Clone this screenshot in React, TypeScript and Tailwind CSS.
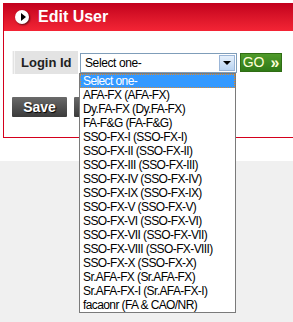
const options = [
  'Select one-',
  'AFA-FX (AFA-FX)',
  'Dy.FA-FX (Dy.FA-FX)',
  'FA-F&G (FA-F&G)',
  'SSO-FX-I (SSO-FX-I)',
  'SSO-FX-II (SSO-FX-II)',
  'SSO-FX-III (SSO-FX-III)',
  'SSO-FX-IV (SSO-FX-IV)',
  'SSO-FX-IX (SSO-FX-IX)',
  'SSO-FX-V (SSO-FX-V)',
  'SSO-FX-VI (SSO-FX-VI)',
  'SSO-FX-VII (SSO-FX-VII)',
  'SSO-FX-VIII (SSO-FX-VIII)',
  'SSO-FX-X (SSO-FX-X)',
  'Sr.AFA-FX (Sr.AFA-FX)',
  'Sr.AFA-FX-I (Sr.AFA-FX-I)',
  'facaonr (FA & CAO/NR)',
]

export default function App() {
  return (
    <div className="relative h-[322px] w-[293px] overflow-hidden bg-[#f0f0f0] font-['Liberation_Sans',Arial,sans-serif]">
      <div className="h-[161px] bg-white pl-[3px] pt-[3px]">
        <div className="border-b border-l border-[#d4001c]">
          <div className="flex h-[28px] items-center gap-[9px] bg-gradient-to-b from-[#c2001d] to-[#f42435] pl-[11px]">
            <div className="flex h-[14px] w-[14px] items-center justify-center rounded-full bg-white shadow-[1px_1px_2px_rgba(0,0,0,0.6)]">
              <div className="ml-[2px] h-0 w-0 border-y-[4px] border-l-[5px] border-y-transparent border-l-black" />
            </div>
            <span className="text-[16px] font-bold text-white">Edit User</span>
          </div>

          <div className="px-[8px] pb-[20px] pt-[20px]">
            <div className="flex items-center">
              <div className="flex h-[23px] w-[66px] items-center border-l-[3px] border-double border-[#f4f4f4] bg-[#e3e3e3] pl-[6px]">
                <span className="text-[13px] font-bold text-[#222]">Login Id</span>
              </div>
              <div className="ml-[2px] flex h-[20px] w-[157px] items-center justify-between border border-[#7f9db9] bg-white">
                <span className="pl-[4px] text-[12px] tracking-[-0.4px] text-black">Select one-</span>
                <div className="mr-[1px] flex h-[16px] w-[16px] items-center justify-center border border-[#9bb6d8] bg-gradient-to-b from-[#e6f0fb] to-[#b9d3f1]">
                  <div className="h-0 w-0 border-x-[4px] border-t-[4px] border-x-transparent border-t-black" />
                </div>
              </div>
              <button
                type="button"
                className="ml-[3px] flex h-[19px] w-[42px] items-center justify-center gap-[6px] border border-[#2f6d14] bg-gradient-to-b from-[#4f9a2a] to-[#2f7a16] text-[14px] text-[#ffffd8]"
              >
                GO
                <span className="text-[16px] font-bold leading-none">»</span>
              </button>
            </div>

            <div className="mt-[23px] flex gap-[7px]">
              <button
                type="button"
                className="h-[20px] w-[55px] rounded-[1px] bg-gradient-to-b from-[#6a6a6a] to-[#3b3b3b] text-[14px] font-bold text-white [text-shadow:1px_1px_1px_#000]"
              >
                Save
              </button>
              <button
                type="button"
                className="h-[20px] w-[60px] rounded-[1px] bg-gradient-to-b from-[#6a6a6a] to-[#3b3b3b]"
              />
            </div>
          </div>
        </div>
      </div>

      <div className="absolute left-[79px] top-[73px] w-[157px] border border-[#7a7a7a] bg-white">
        {options.map((option, i) => (
          <div
            key={option}
            className={
              i === 0
                ? 'h-[14px] whitespace-nowrap border border-dotted border-[#e08a2c] bg-[#3399ff] pl-[2px] text-[12px] leading-[12px] tracking-[-0.6px] text-white'
                : 'h-[14px] whitespace-nowrap pl-[3px] text-[12px] leading-[14px] tracking-[-0.6px] text-black'
            }
          >
            {option}
          </div>
        ))}
      </div>
    </div>
  )
}
